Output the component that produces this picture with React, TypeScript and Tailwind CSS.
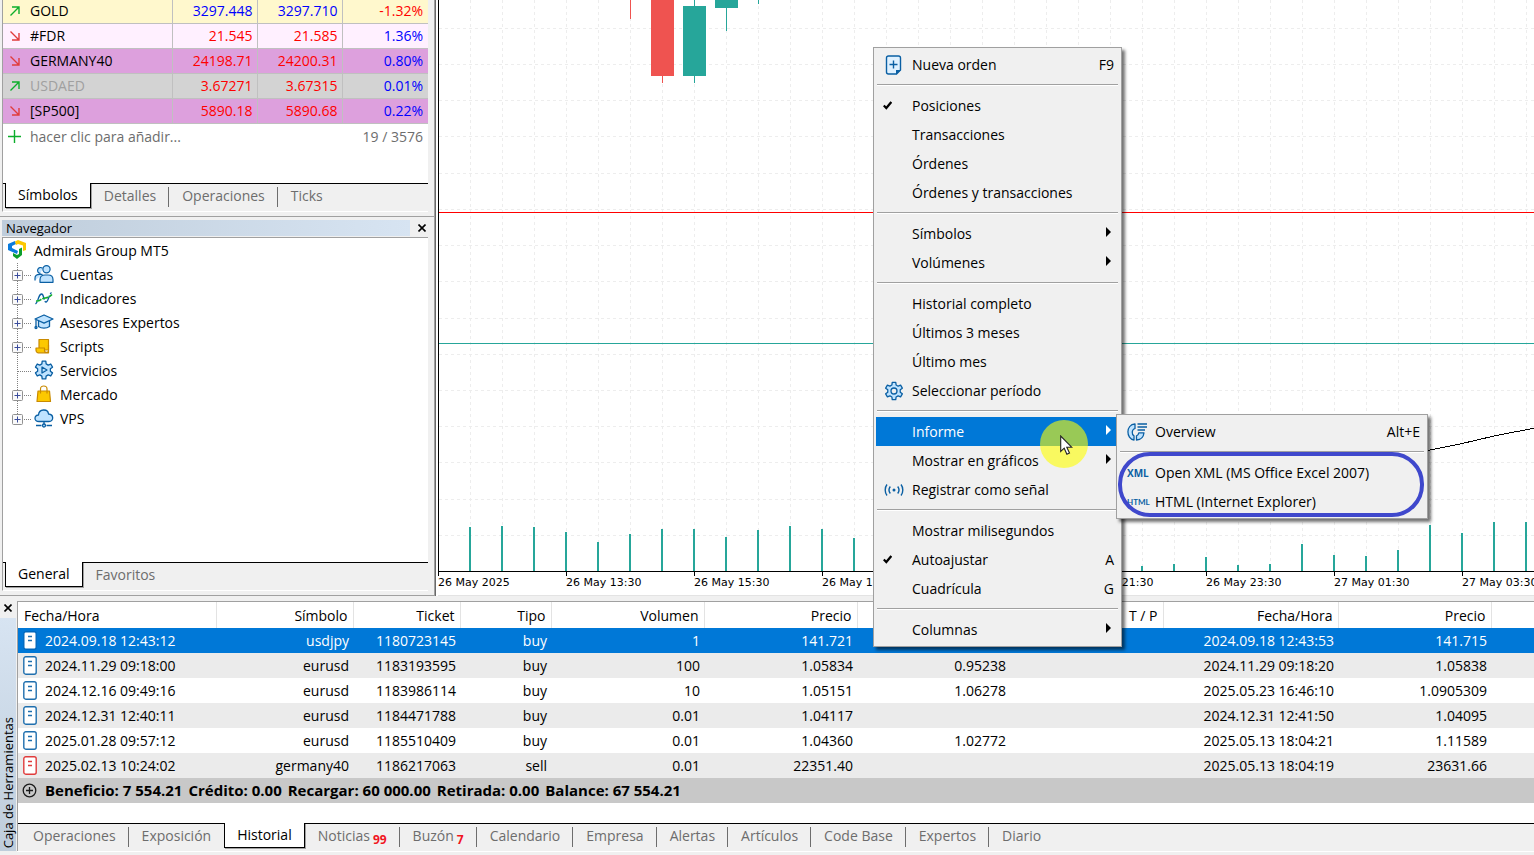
import { ReactNode, useState } from 'react';
import clsx from 'clsx';

type Quote = {
  symbol: string;
  up: boolean;
  bid: string;
  ask: string;
  change: string;
  rowClass: string;
  nameClass?: string;
  priceClass: string;
  changeClass: string;
};

const quotes: Quote[] = [
  { symbol: 'GOLD', up: true, bid: '3297.448', ask: '3297.710', change: '-1.32%', rowClass: 'bg-[#fff8cd] h-[23px]', priceClass: 'text-[#0000ff]', changeClass: 'text-[#ff0000]' },
  { symbol: '#FDR', up: false, bid: '21.545', ask: '21.585', change: '1.36%', rowClass: 'bg-[#fff0ff] h-[25px]', priceClass: 'text-[#ff0000]', changeClass: 'text-[#0000ff]' },
  { symbol: 'GERMANY40', up: false, bid: '24198.71', ask: '24200.31', change: '0.80%', rowClass: 'bg-[#dda0dd] h-[25px]', priceClass: 'text-[#ff0000]', changeClass: 'text-[#0000ff]' },
  { symbol: 'USDAED', up: true, bid: '3.67271', ask: '3.67315', change: '0.01%', rowClass: 'bg-[#d3d3d3] h-[25px]', nameClass: 'text-[#a0a0a0]', priceClass: 'text-[#ff0000]', changeClass: 'text-[#0000ff]' },
  { symbol: '[SP500]', up: false, bid: '5890.18', ask: '5890.68', change: '0.22%', rowClass: 'bg-[#dda0dd] h-[25px]', priceClass: 'text-[#ff0000]', changeClass: 'text-[#0000ff]' }
];

type Deal = {
  sell?: boolean;
  cells: string[];
};

const headers = ['Fecha/Hora', 'Símbolo', 'Ticket', 'Tipo', 'Volumen', 'Precio', 'S / L', 'T / P', 'Fecha/Hora', 'Precio', ''];

const deals: Deal[] = [
  { cells: ['2024.09.18 12:43:12', 'usdjpy', '1180723145', 'buy', '1', '141.721', '', '', '2024.09.18 12:43:53', '141.715', ''] },
  { cells: ['2024.11.29 09:18:00', 'eurusd', '1183193595', 'buy', '100', '1.05834', '0.95238', '', '2024.11.29 09:18:20', '1.05838', ''] },
  { cells: ['2024.12.16 09:49:16', 'eurusd', '1183986114', 'buy', '10', '1.05151', '1.06278', '', '2025.05.23 16:46:10', '1.0905309', ''] },
  { cells: ['2024.12.31 12:40:11', 'eurusd', '1184471788', 'buy', '0.01', '1.04117', '', '', '2024.12.31 12:41:50', '1.04095', ''] },
  { cells: ['2025.01.28 09:57:12', 'eurusd', '1185510409', 'buy', '0.01', '1.04360', '1.02772', '', '2025.05.13 18:04:21', '1.11589', ''] },
  { sell: true, cells: ['2025.02.13 10:24:02', 'germany40', '1186217063', 'sell', '0.01', '22351.40', '', '', '2025.05.13 18:04:19', '23631.66', ''] }
];

const volumes = [44, 45, 44, 39, 29, 37, 42, 42, 34, 41, 45, 42, 33, 0, 0, 0, 0, 0, 0, 0, 0, 5, 7, 14, 6, 7, 27, 16, 15, 21, 46, 38, 49, 49];
const gridRows = [28, 64, 100, 136, 173, 209, 245, 281, 318, 354, 390, 426, 462, 499, 535];
const times = ['26 May 2025', '26 May 13:30', '26 May 15:30', '26 May 17:30', '26 May 19:30', '26 May 21:30', '26 May 23:30', '27 May 01:30', '27 May 03:30'];

const blue = '#0a5fa3';
const sky = '#bfe3ff';

function TrendArrow({ up }: { up: boolean }) {
  return (
    <svg width="10" height="10" viewBox="0 0 10 10" fill="none" stroke={up ? '#0cae2b' : '#e03c3c'} strokeWidth="1.4">
      {up ? <path d="M.5 9.5 9 1M2 1h7v7" /> : <path d="M.5.5 9 9M2 9h7V2" />}
    </svg>
  );
}

function CloseIcon() {
  return (
    <svg width="8" height="8" viewBox="0 0 8 8" stroke="#000" strokeWidth="1.6">
      <path d="M.5.5l7 7M7.5.5l-7 7" />
    </svg>
  );
}

function DocIcon({ color, filled }: { color: string; filled?: boolean }) {
  return (
    <svg width="14" height="19" viewBox="0 0 14 19" fill="none" className="mb-px shrink-0">
      <rect x=".8" y=".8" width="12.4" height="17.4" rx="2" fill="#fff" stroke={filled ? '#0068bd' : color} strokeWidth="1.4" />
      <path d="M5 5.5h4M5 9.5h4" stroke={color} strokeWidth="1.3" />
    </svg>
  );
}

function gearPath(cx: number, cy: number, r: number) {
  const points: string[] = [];
  for (let i = 0; i < 6; i++) {
    const a = (Math.PI / 3) * i - Math.PI / 2;
    [[-0.2, 1], [0.2, 1], [0.34, 0.72], [0.71, 0.72]].forEach(([da, k]) => {
      points.push(`${(cx + Math.cos(a + da) * r * k).toFixed(2)} ${(cy + Math.sin(a + da) * r * k).toFixed(2)}`);
    });
  }
  return `M${points.join('L')}Z`;
}

const treeIcons: Record<string, ReactNode> = {
  accounts: (
    <g fill={sky} stroke={blue} strokeWidth="1.2">
      <path d="M1 16.5v-2.2c0-2.5 1.7-4 4.500-4h3M6.500 9.500a3 3 0 1 1 2-5.300" />
      <circle cx="12.500" cy="5.200" r="3.600" />
      <path d="M6 18.300v-2.500c0-3 2-4.800 5-4.800h3.200c3 0 4.800 1.800 4.800 4.800v2.500Z" strokeLinejoin="round" />
    </g>
  ),
  indicators: (
    <g fill="none" strokeWidth="1.3">
      <path d="M1.500 16c1.500-1 2-3 3-6s2-4 3.200-4c2.300 0 2 8 4.300 8 1.600 0 2.300-3.500 3.500-6.500.6-1.400 1.300-2.500 2-3" stroke={blue} strokeDasharray="3 1.500 14 1.500 9 1.500" />
      <path d="M2 13c4 .5 4-1.500 7-2.500s5 0 9-4" stroke="#0cae2b" strokeWidth="1.600" strokeDasharray="6 1" />
    </g>
  ),
  experts: (
    <g fill={sky} stroke={blue} strokeWidth="1.300" strokeLinejoin="round">
      <path d="M4.500 9v5.500c3 2.200 8 2.200 11 0V9" />
      <path d="M1 7l9-4 9 4-9 4.200Z" />
      <path d="M2 8v6" fill="none" />
      <circle cx="2" cy="15.500" r="1" />
    </g>
  ),
  scripts: (
    <g fill="#fcc800" stroke="#c98a00" strokeWidth="1.200" strokeLinejoin="round">
      <path d="M5 3.500h9.500V14H5Z" />
      <path d="M2 12h8.500v2.500c0 2.500 4 2.500 4 0V9v7.800H4.200C2.500 16.800 2 15 2 14Z" />
    </g>
  ),
  services: (
    <g fill={sky} stroke={blue} strokeWidth="1.300" strokeLinejoin="round">
      <path d={gearPath(10, 10, 9)} />
      <path d="M8 7v6l5-3Z" />
    </g>
  ),
  market: (
    <g fill="#fcc800" stroke="#c98a00" strokeWidth="1.200" strokeLinejoin="round">
      <path d="M4 7h11.500l1 10.500H3Z" />
      <path d="M6.500 9.500V5c0-4 6.500-4 6.500 0v4.500" fill="none" />
    </g>
  ),
  vps: (
    <g fill={sky} stroke={blue} strokeWidth="1.300" strokeLinejoin="round">
      <path d="M5 13.500C-.5 13.500 0 7 4.500 7 5 .5 14 .5 14.500 6c5.500.3 5.500 7.500.5 7.500Z" />
      <path d="M10 13.500v3M2 17.500h5.500M12.500 17.500H18" />
      <circle cx="10" cy="17.500" r="1.500" />
    </g>
  )
};

const treeItems = [
  { name: 'Cuentas', icon: 'accounts', expandable: true },
  { name: 'Indicadores', icon: 'indicators', expandable: true },
  { name: 'Asesores Expertos', icon: 'experts', expandable: true },
  { name: 'Scripts', icon: 'scripts', expandable: true },
  { name: 'Servicios', icon: 'services', expandable: false },
  { name: 'Mercado', icon: 'market', expandable: true },
  { name: 'VPS', icon: 'vps', expandable: true }
];

function TreeBranch({ expandable, last }: { expandable: boolean; last: boolean }) {
  return (
    <svg width="22" height="24" viewBox="0 0 22 24" fill="none" className="shrink-0">
      <path d={last ? 'M5.500 0v12' : 'M5.500 0v24'} stroke="#808080" strokeDasharray="1 1" />
      <path d="M6 12.500h14" stroke="#808080" strokeDasharray="1 1" />
      {expandable && (
        <>
          <rect x=".5" y="7.500" width="10" height="10" rx="1" fill="#fafafa" stroke="#919191" />
          <path d="M2.500 12.500h6M5.500 9.500v6" stroke="#3a4c9c" />
        </>
      )}
    </svg>
  );
}

type TabItem = { name: string; badge?: string };

function TabBar({ items, initial }: { items: TabItem[]; initial: string }) {
  const [active, setActive] = useState(initial);
  const activeIndex = items.findIndex(item => item.name === active);

  return (
    <div className="flex h-7 items-start bg-[#f0f0f0]">
      <span className="w-[2px] h-px bg-black" />
      {items.map((item, index) => {
        const isActive = index === activeIndex;
        const divided = !isActive && index + 1 !== activeIndex && index < items.length - 1;
        return (
          <button
            key={item.name}
            type="button"
            onClick={() => setActive(item.name)}
            className={clsx(
              'relative flex h-[25px] items-center whitespace-nowrap',
              isActive
                ? 'px-3 bg-white border-x border-b border-black text-black shadow-[1px_1px_0_#a0a0a0]'
                : 'px-[13px] border-t border-t-black text-[#6d6d6d]'
            )}
          >
            {item.name}
            {item.badge && (
              <span className="ml-[3px] mt-2 text-xs font-bold text-[#f0141e]">{item.badge}</span>
            )}
            {divided && <span className="absolute right-0 top-[3px] h-5 w-px bg-[#6d6d6d]" />}
          </button>
        );
      })}
      <span className="h-px flex-1 bg-black" />
    </div>
  );
}

function MarketWatch() {
  return (
    <section className="ml-[2px] mr-[6px] border-b border-l border-b-white border-l-[#a0a0a0] bg-white">
      <table className="w-full table-fixed border-collapse">
        <colgroup>
          <col />
          <col className="w-[85px]" />
          <col className="w-[85px]" />
          <col className="w-[86px]" />
        </colgroup>
        <tbody>
          {quotes.map(q => (
            <tr key={q.symbol} className={clsx('border-b border-[#c0c0c0]', q.rowClass)}>
              <td className="p-0 border-r border-[#c0c0c0]">
                <div className="flex items-center gap-[10px] pl-[7px]">
                  <TrendArrow up={q.up} />
                  <span className={q.nameClass}>{q.symbol}</span>
                </div>
              </td>
              <td className={clsx('p-0 pr-1 text-right border-r border-[#c0c0c0]', q.priceClass)}>{q.bid}</td>
              <td className={clsx('p-0 pr-1 text-right border-r border-[#c0c0c0]', q.priceClass)}>{q.ask}</td>
              <td className={clsx('p-0 pr-[5px] text-right', q.changeClass)}>{q.change}</td>
            </tr>
          ))}
        </tbody>
      </table>
      <div className="flex h-[59px] items-start pl-[5px] pr-[5px] pt-[3px] text-[#6d6d6d]">
        <svg width="13" height="13" viewBox="0 0 13 13" stroke="#0cae2b" strokeWidth="1.4" className="mt-[3px]">
          <path d="M0 6.500h13M6.500 0v13" />
        </svg>
        <button type="button" className="ml-[9px]">hacer clic para añadir...</button>
        <span className="ml-auto">19 / 3576</span>
      </div>
      <TabBar
        items={[{ name: 'Símbolos' }, { name: 'Detalles' }, { name: 'Operaciones' }, { name: 'Ticks' }]}
        initial="Símbolos"
      />
    </section>
  );
}

function Navigator() {
  return (
    <section className="flex flex-1 flex-col border-t border-[#a0a0a0] pt-[3px]">
      <header className="ml-[2px] mr-[6px] flex h-[17px] items-center justify-between">
        <h2 className="h-4 flex-1 bg-linear-to-r from-[#bfcddb] to-[#d7e4f2] pl-1 text-[13px] leading-4">Navegador</h2>
        <button type="button" aria-label="Cerrar" className="ml-2 mr-[2px] p-0">
          <CloseIcon />
        </button>
      </header>
      <div className="ml-[2px] mr-[6px] flex flex-1 flex-col border-l border-t border-b border-l-[#a0a0a0] border-t-[#a0a0a0] border-b-white bg-white">
        <div className="flex-1 pt-px">
          <div className="flex h-6 items-center pl-[5px]">
            <svg width="18" height="19" viewBox="0 0 18 19" className="mb-[2px]">
              <path d="M0 4 7 1l1 3-4 2v2l6 3-1 3-9-4Z" fill="#0a7bdc" />
              <path d="M7 1.500 10 0l8 3v7l-3 1V5.500L10 4 8 5Z" fill="#fcc800" />
              <path d="M11 9l3-1.500V15l-5 4-4-3v-3l4 2 2-1Z" fill="#0c9e2b" />
            </svg>
            <span className="ml-2">Admirals Group MT5</span>
          </div>
          <ul>
            {treeItems.map((item, index) => (
              <li key={item.name} className="flex h-6 items-center pl-[9px]">
                <TreeBranch expandable={item.expandable} last={index === treeItems.length - 1} />
                <svg width="20" height="20" viewBox="0 0 20 20" fill="none" className="mb-px">{treeIcons[item.icon]}</svg>
                <span className="ml-[6px]">{item.name}</span>
              </li>
            ))}
          </ul>
        </div>
        <TabBar items={[{ name: 'General' }, { name: 'Favoritos' }]} initial="General" />
      </div>
    </section>
  );
}

function Chart() {
  return (
    <section className="flex min-w-0 flex-1 flex-col border-l border-[#696969] bg-white pl-[2px]">
      <div className="relative flex-1 overflow-hidden border-b border-l border-black">
        <svg width="2400" height="571" className="absolute bottom-0 left-0 max-w-none" shapeRendering="crispEdges">
          <g stroke="#ededed" strokeDasharray="3 3">
            {gridRows.map(y => (
              <path key={y} d={`M0 ${y}.5H2400`} />
            ))}
            {Array.from({ length: 74 }, (_, i) => (
              <path key={i} d={`M${31 + i * 32}.5 0V571`} />
            ))}
          </g>
          <rect x="0" y="212" width="2400" height="1" fill="#ff0000" />
          <rect x="0" y="343" width="2400" height="1" fill="#26a69a" />
          <g fill="#ef5350">
            <rect x="191" y="0" width="1" height="19" />
            <rect x="212" y="0" width="23" height="76" />
            <rect x="223" y="76" width="1" height="7" />
          </g>
          <g fill="#26a69a">
            <rect x="244" y="6" width="23" height="70" />
            <rect x="255" y="0" width="1" height="83" />
            <rect x="276" y="0" width="23" height="8" />
            <rect x="287" y="8" width="1" height="23" />
            <rect x="319" y="0" width="1" height="4" />
            {volumes.map((v, i) => (
              <rect key={i} x={30 + i * 32} y={571 - v} width="2" height={v} />
            ))}
          </g>
          <path d="M960 456 989 450.500 1021 444 1055 436 1096 428" fill="none" stroke="#000" />
        </svg>
      </div>
      <div className="flex h-6 overflow-hidden border-b border-[#e3e3e3] font-['DejaVu_Sans'] text-[11px] leading-[14px]">
        {times.map(time => (
          <div key={time} className="w-32 shrink-0 whitespace-nowrap">
            <span className="block h-1 w-px bg-black" />
            {time}
          </div>
        ))}
      </div>
    </section>
  );
}

function Toolbox() {
  return (
    <section className="flex pt-[5px]">
      <aside className="flex w-[17px] flex-col items-center">
        <button type="button" aria-label="Cerrar" className="mt-[3px] mr-px flex h-[14px] shrink-0 items-start">
          <CloseIcon />
        </button>
        <div className="flex w-4 flex-1 items-end justify-center bg-linear-to-b from-[#d7e4f2] to-[#bfcddb] pb-[3px] mb-1 mr-px">
          <h2 className="rotate-180 whitespace-nowrap text-[13px] leading-4 [writing-mode:vertical-rl]">Caja de Herramientas</h2>
        </div>
      </aside>
      <div className="min-w-0 flex-1">
        <div className="border-l border-t border-[#a0a0a0] bg-white">
          <table className="w-full table-fixed border-collapse">
            <colgroup>
              <col className="w-[198px]" />
              <col className="w-[137px]" />
              <col className="w-[107px]" />
              <col className="w-[91px]" />
              <col className="w-[153px]" />
              <col className="w-[153px]" />
              <col className="w-[153px]" />
              <col className="w-[153px]" />
              <col className="w-[175px]" />
              <col className="w-[153px]" />
              <col />
            </colgroup>
            <thead>
              <tr className="h-[26px]">
                {headers.map((h, i) => (
                  <th
                    key={i}
                    className={clsx(
                      'p-0 pt-[2px] font-normal',
                      i === 0 ? 'pl-[6px] text-left' : 'pr-[5px] text-right',
                      i < headers.length - 1 && 'border-r border-[#e3e3e3]'
                    )}
                  >
                    {h}
                  </th>
                ))}
              </tr>
            </thead>
            <tbody>
              {deals.map((deal, row) => (
                <tr
                  key={deal.cells[2]}
                  className={clsx('h-[25px]', row === 0 ? 'bg-[#0078d7] text-white' : row % 2 ? 'bg-[#ebebeb]' : 'bg-white')}
                >
                  {deal.cells.map((cell, i) => (
                    <td key={i} className={clsx('p-0', i === 0 ? 'pl-[5px]' : 'pr-1 text-right')}>
                      {i === 0 ? (
                        <div className="flex items-center gap-2">
                          <DocIcon color={deal.sell ? '#e03c3c' : '#1f6fae'} filled={row === 0} />
                          {cell}
                        </div>
                      ) : (
                        cell
                      )}
                    </td>
                  ))}
                </tr>
              ))}
            </tbody>
          </table>
          <div className="flex h-[25px] items-center gap-2 bg-[#c8c8c8] pl-1 text-[15px] font-bold">
            <svg width="15" height="15" viewBox="0 0 15 15" fill="none" stroke="#1a1a1a" strokeWidth="1.3">
              <circle cx="7.500" cy="7.500" r="6.300" />
              <path d="M4 7.500h7M7.500 4v7" />
            </svg>
            <div className="flex gap-[6px] whitespace-nowrap">
              <span>Beneficio: 7 554.21</span>
              <span>Crédito: 0.00</span>
              <span>Recargar: 60 000.00</span>
              <span>Retirada: 0.00</span>
              <span>Balance: 67 554.21</span>
            </div>
          </div>
          <div className="h-5" />
          <TabBar
            items={[
              { name: 'Operaciones' },
              { name: 'Exposición' },
              { name: 'Historial' },
              { name: 'Noticias', badge: '99' },
              { name: 'Buzón', badge: '7' },
              { name: 'Calendario' },
              { name: 'Empresa' },
              { name: 'Alertas' },
              { name: 'Artículos' },
              { name: 'Code Base' },
              { name: 'Expertos' },
              { name: 'Diario' }
            ]}
            initial="Historial"
          />
        </div>
        <div className="h-1 border-t border-white" />
      </div>
    </section>
  );
}

type MenuItemProps = {
  label: string;
  icon?: ReactNode;
  checked?: boolean;
  shortcut?: string;
  submenu?: boolean;
  active?: boolean;
};

function MenuItem({ label, icon, checked, shortcut, submenu, active }: MenuItemProps) {
  return (
    <button
      type="button"
      role="menuitem"
      className={clsx('flex h-[29px] w-full items-center pr-[5px] text-left', active && 'bg-[#0078d7] text-white')}
    >
      <span className="flex w-9 shrink-0 items-center pl-[7px]">
        {checked ? (
          <svg width="9" height="9" viewBox="0 0 9 9" fill="none" stroke="#000" strokeWidth="2.200">
            <path d="M.8 4.500 3.300 7 8.300 1" />
          </svg>
        ) : (
          icon
        )}
      </span>
      <span className="flex-1 whitespace-nowrap">{label}</span>
      {shortcut && <span>{shortcut}</span>}
      {submenu && (
        <svg width="5" height="10" viewBox="0 0 5 10" fill="currentColor" className="mb-1 mr-[3px]">
          <path d="M0 0l5 5-5 5Z" />
        </svg>
      )}
    </button>
  );
}

function Separator() {
  return <div role="separator" className="mx-px mt-[5px] mb-[5px] h-[2px] border-t border-b border-t-[#a0a0a0] border-b-white" />;
}

const menuClass = 'absolute border border-[#a0a0a0] bg-[#f0f0f0] p-[2px] shadow-[3px_3px_3px_rgba(0,0,0,0.55)]';

function ContextMenu() {
  return (
    <div role="menu" className={clsx(menuClass, 'left-[873px] top-[47px] w-[249px]')}>
      <MenuItem
        label="Nueva orden"
        shortcut="F9"
        icon={
          <svg width="20" height="20" viewBox="0 0 20 20" fill="none" stroke={blue} strokeWidth="1.400" className="ml-px">
            <path d="M12.500 19H4.500c-1.200 0-2-.8-2-2V3c0-1.200.8-2 2-2h10c1.200 0 2 .8 2 2v12Z" fill="#dff1ff" />
            <path d="M12 19.500v-4.500h5Z" fill={blue} stroke="none" />
            <path d="M5.500 9.500h8M9.500 5.500v8" />
          </svg>
        }
      />
      <Separator />
      <MenuItem label="Posiciones" checked />
      <MenuItem label="Transacciones" />
      <MenuItem label="Órdenes" />
      <MenuItem label="Órdenes y transacciones" />
      <Separator />
      <MenuItem label="Símbolos" submenu />
      <MenuItem label="Volúmenes" submenu />
      <Separator />
      <MenuItem label="Historial completo" />
      <MenuItem label="Últimos 3 meses" />
      <MenuItem label="Último mes" />
      <MenuItem
        label="Seleccionar período"
        icon={
          <svg width="20" height="20" viewBox="0 0 20 20" fill={sky} stroke={blue} strokeWidth="1.300" strokeLinejoin="round" className="ml-px">
            <path d={gearPath(10, 10, 8.8)} />
            <circle cx="10" cy="10" r="3" fill="#f0f0f0" />
          </svg>
        }
      />
      <Separator />
      <MenuItem label="Informe" submenu active />
      <MenuItem label="Mostrar en gráficos" submenu />
      <MenuItem
        label="Registrar como señal"
        icon={
          <svg width="20" height="14" viewBox="0 0 20 14" fill="none" stroke={blue} strokeWidth="1.400" className="ml-px">
            <path d="M3 1.500c-2.400 3-2.400 8 0 11M17 1.500c2.400 3 2.400 8 0 11M6.300 3.500c-1.500 2-1.500 5 0 7M13.700 3.500c1.500 2 1.500 5 0 7" />
            <circle cx="10" cy="7" r="1.500" fill={blue} stroke="none" />
          </svg>
        }
      />
      <Separator />
      <MenuItem label="Mostrar milisegundos" />
      <MenuItem label="Autoajustar" shortcut="A" checked />
      <MenuItem label="Cuadrícula" shortcut="G" />
      <Separator />
      <MenuItem label="Columnas" submenu />
    </div>
  );
}

function ReportMenu() {
  return (
    <div role="menu" className={clsx(menuClass, 'left-[1116px] top-[414px] w-[312px]')}>
      <MenuItem
        label="Overview"
        shortcut="Alt+E"
        icon={
          <svg width="20" height="18" viewBox="0 0 20 18" fill={sky} stroke={blue} strokeWidth="1.300" strokeLinejoin="round" className="ml-px">
            <path d="M8 1C-1.500 1.500-1 16 7 17V12.800C4.500 11.500 4.500 6.500 8 5.500Z" />
            <path d="M9.500 17v-4.200c1.700-.5 2-1.500 2.300-3H17c-.5 4.500-3 7-7.500 7.200Z" />
            <path d="M10.500 1H20M10.500 4H20M10.500 7H18" fill="none" />
          </svg>
        }
      />
      <Separator />
      <MenuItem
        label="Open XML (MS Office Excel 2007)"
        icon={<span className="ml-px font-['Liberation_Sans_Narrow','Open_Sans',sans-serif] text-[10px] font-bold leading-none text-[#0a5fa3]">XML</span>}
      />
      <MenuItem
        label="HTML (Internet Explorer)"
        icon={<span className="ml-px font-['Liberation_Sans_Narrow','Lato',sans-serif] text-[8px] font-bold leading-none text-[#0a5fa3]">HTML</span>}
      />
    </div>
  );
}

function Pointer() {
  return (
    <div className="pointer-events-none absolute left-[1040px] top-[420px]">
      <div className="size-12 rounded-full bg-[#ffff00]/60" />
      <svg width="13" height="20" viewBox="0 0 13 20" className="absolute left-5 top-[15px]">
        <path d="M.7 1v15.500l3.500-3.300 2.700 6 2.600-1.200-2.700-5.700h5.100Z" fill="#fff" stroke="#222" strokeWidth="1.100" />
      </svg>
    </div>
  );
}

export default function App() {
  return (
    <div className="relative flex h-screen flex-col overflow-hidden bg-[#f0f0f0] font-['Open_Sans','Noto_Sans',sans-serif] text-sm text-black">
      <div className="flex min-h-0 flex-1">
        <div className="flex w-[435px] shrink-0 flex-col border-r border-b border-[#a0a0a0]">
          <MarketWatch />
          <div className="h-1" />
          <Navigator />
          <div className="h-[4px]" />
        </div>
        <Chart />
      </div>
      <Toolbox />
      <ContextMenu />
      <ReportMenu />
      <div className="pointer-events-none absolute left-[1118px] top-[452px] h-[65px] w-[306px] rounded-[32px] border-4 border-[#3f48cc]" />
      <Pointer />
    </div>
  );
}
